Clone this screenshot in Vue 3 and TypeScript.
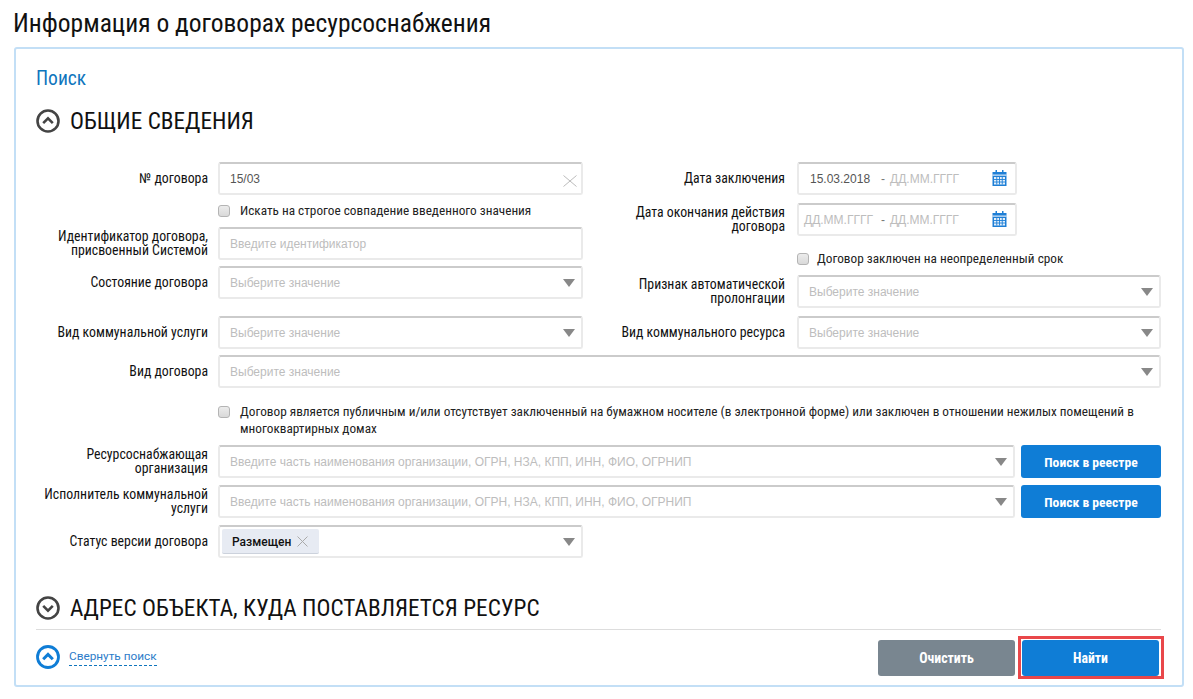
<script setup lang="ts">
const orgPlaceholder = 'Введите часть наименования организации, ОГРН, НЗА, КПП, ИНН, ФИО, ОГРНИП'
const selectPlaceholder = 'Выберите значение'
</script>

<template>
  <div class="page">
    <h1 class="title">Информация о договорах ресурсоснабжения</h1>
    <section class="panel">
      <h2 class="search">Поиск</h2>
      <div class="section-head first">
        <svg class="round" viewBox="0 0 24 24"><circle cx="12" cy="12" r="10.500" fill="none" stroke="#444" stroke-width="2.600" /><path d="M7.200 14.200 12 9.400l4.800 4.800" fill="none" stroke="#444" stroke-width="2.600" /></svg>
        <span>ОБЩИЕ СВЕДЕНИЯ</span>
      </div>

      <div class="columns">
        <div class="col">
          <div class="row">
            <label class="lbl left">№ договора</label>
            <div class="field">
              <span class="value">15/03</span>
              <svg class="clear" viewBox="0 0 14 12" preserveAspectRatio="none"><path d="M.5.500l13 11M13.500.500l-13 11" stroke="#bbb" stroke-width="1" fill="none" /></svg>
            </div>
          </div>
          <div class="check-row left-check after-field">
            <span class="box"></span><span class="check-text">Искать на строгое совпадение введенного значения</span>
          </div>
          <div class="row m8">
            <label class="lbl left">Идентификатор договора, присвоенный Системой</label>
            <div class="field"><span class="ph">Введите идентификатор</span></div>
          </div>
          <div class="row m6">
            <label class="lbl left">Состояние договора</label>
            <div class="field"><span class="ph">{{ selectPlaceholder }}</span><i class="arrow"></i></div>
          </div>
          <div class="row m17">
            <label class="lbl left">Вид коммунальной услуги</label>
            <div class="field"><span class="ph">{{ selectPlaceholder }}</span><i class="arrow"></i></div>
          </div>
        </div>

        <div class="col right">
          <div class="row">
            <label class="lbl rlbl">Дата заключения</label>
            <div class="field date">
              <span class="value d1">15.03.2018</span><span class="dash">-</span><span class="ph">ДД.ММ.ГГГГ</span>
              <svg class="cal" viewBox="0 0 14 16"><path d="M0 2h14v14H0z" fill="#1e7fd6" /><path d="M3 0h1.500v3H3zM9.500 0H11v3H9.500z" fill="#1e7fd6" /><path d="M0 4.600h14v1H0z" fill="#fff" /><path d="M1.500 7h11v7.500h-11z" fill="#e4f0fb" /><path d="M4.250 7v7.500M7 7v7.500M9.750 7v7.500M1.500 9.500h11M1.500 12h11" stroke="#1e7fd6" stroke-width=".9" /></svg>
            </div>
          </div>
          <div class="row m8">
            <label class="lbl rlbl">Дата окончания действия договора</label>
            <div class="field date">
              <span class="ph d0">ДД.ММ.ГГГГ</span><span class="dash">-</span><span class="ph">ДД.ММ.ГГГГ</span>
              <svg class="cal" viewBox="0 0 14 16"><path d="M0 2h14v14H0z" fill="#1e7fd6" /><path d="M3 0h1.500v3H3zM9.500 0H11v3H9.500z" fill="#1e7fd6" /><path d="M0 4.600h14v1H0z" fill="#fff" /><path d="M1.500 7h11v7.500h-11z" fill="#e4f0fb" /><path d="M4.250 7v7.500M7 7v7.500M9.750 7v7.500M1.500 9.500h11M1.500 12h11" stroke="#1e7fd6" stroke-width=".9" /></svg>
            </div>
          </div>
          <div class="check-row right-check">
            <span class="box"></span><span class="check-text">Договор заключен на неопределенный срок</span>
          </div>
          <div class="row m8">
            <label class="lbl rlbl">Признак автоматической пролонгации</label>
            <div class="field"><span class="ph">{{ selectPlaceholder }}</span><i class="arrow"></i></div>
          </div>
          <div class="row m8">
            <label class="lbl rlbl">Вид коммунального ресурса</label>
            <div class="field"><span class="ph">{{ selectPlaceholder }}</span><i class="arrow"></i></div>
          </div>
        </div>
      </div>

      <div class="row m6">
        <label class="lbl left">Вид договора</label>
        <div class="field"><span class="ph">{{ selectPlaceholder }}</span><i class="arrow"></i></div>
      </div>

      <div class="check-row left-check public">
        <span class="box"></span>
        <span class="check-text">Договор является публичным и/или отсутствует заключенный на бумажном носителе (в электронной форме) или заключен в отношении нежилых помещений в многоквартирных домах</span>
      </div>

      <div class="row m8">
        <label class="lbl left">Ресурсоснабжающая организация</label>
        <div class="field"><span class="ph">{{ orgPlaceholder }}</span><i class="arrow"></i></div>
        <button class="btn reg" type="button">Поиск в реестре</button>
      </div>
      <div class="row m7">
        <label class="lbl left">Исполнитель коммунальной услуги</label>
        <div class="field"><span class="ph">{{ orgPlaceholder }}</span><i class="arrow"></i></div>
        <button class="btn reg" type="button">Поиск в реестре</button>
      </div>
      <div class="row m7 status-row">
        <label class="lbl left">Статус версии договора</label>
        <div class="field status">
          <span class="tag">Размещен<svg class="tag-x" viewBox="0 0 11 11"><path d="M.5.500l10 10M10.500.500l-10 10" stroke="#aaa" stroke-width="1" fill="none" /></svg></span>
          <i class="arrow"></i>
        </div>
      </div>

      <div class="section-head second">
        <svg class="round" viewBox="0 0 24 24"><circle cx="12" cy="12" r="10.500" fill="none" stroke="#444" stroke-width="2.600" /><path d="M7.200 9.800 12 14.600l4.800-4.800" fill="none" stroke="#444" stroke-width="2.600" /></svg>
        <span>АДРЕС ОБЪЕКТА, КУДА ПОСТАВЛЯЕТСЯ РЕСУРС</span>
      </div>

      <div class="footer">
        <svg class="round blue" viewBox="0 0 24 24"><circle cx="12" cy="12" r="10.500" fill="none" stroke="#0f7dd6" stroke-width="2.800" /><path d="M7.200 14.200 12 9.400l4.800 4.800" fill="none" stroke="#0f7dd6" stroke-width="3" /></svg>
        <a class="collapse">Свернуть поиск</a>
        <button class="btn clear-btn" type="button">Очистить</button>
        <span class="find-wrap"><button class="btn find" type="button">Найти</button><i class="highlight"></i></span>
      </div>
    </section>
  </div>
</template>

<style>
html, body { margin: 0; background: #fff; }
</style>

<style scoped>
.page {
  width: 1193px;
  height: 699px;
  overflow: hidden;
  padding: 9px 9px 0 14px;
  box-sizing: border-box;
  font-family: "Roboto Condensed", "Liberation Sans Narrow", Roboto, sans-serif;
  color: #111;
}
.title { margin: 0; font-size: 25.500px; line-height: 29px; font-weight: 400; height: 38px; margin-left: -1px; }
.panel {
  height: 640px;
  box-sizing: border-box;
  border: 2px solid #c3dff6;
  border-radius: 3px;
  padding: 19px 21px 0 20px;
}
.search { margin: 0; font-size: 19.500px; line-height: 22px; font-weight: 400; color: #0f75bd; }
.section-head { display: flex; align-items: center; gap: 10px; font-size: 23.250px; line-height: 28px; color: #111; }
.section-head.first { margin-top: 17px; }
.section-head.second { margin-top: 36px; padding-bottom: 7px; border-bottom: 1px solid #ddd; }
.round { width: 24px; height: 24px; flex: none; }
.columns { display: flex; margin-top: 27px; }
.col { width: 547px; flex: none; }
.col.right { width: 578px; }
.row { display: flex; align-items: center; }
.lbl { text-align: right; font-size: 13.800px; line-height: 14px; flex: none; box-sizing: border-box; padding-bottom: 2px; }
.lbl.left { width: 172px; margin-right: 10px; }
.lbl.rlbl { width: 202px; margin-right: 12px; }
.field {
  flex: 1;
  position: relative;
  height: 33px;
  box-sizing: border-box;
  border: 2px solid #eaeaea;
  border-top-color: #cbcbcb;
  border-radius: 3px;
  padding: 0 10px;
  display: flex;
  align-items: center;
  font-family: "Liberation Sans", Arial, sans-serif;
  font-size: 12px;
  background: #fff;
  min-width: 0;
}
.value { color: #555; }
.ph { color: #bdbdbd; white-space: nowrap; }
.clear { position: absolute; right: 4px; top: 11px; width: 14px; height: 12px; }
.arrow {
  position: absolute;
  right: 6px;
  top: 11px;
  width: 0;
  height: 0;
  border-left: 6px solid transparent;
  border-right: 6px solid transparent;
  border-top: 8px solid #888;
}
.date { flex: none; width: 220px; padding: 0 5px 0 11px; }
.d0 { margin-left: -6px; }
.dash { margin: 0 5px 0 11px; color: #777; }
.d0 + .dash { margin-left: 8px; }
.cal { position: absolute; right: 8px; top: 6px; width: 15px; height: 16px; }
.check-row { display: flex; align-items: flex-start; font-size: 13.250px; line-height: 17px; }
.box {
  width: 10px;
  height: 10px;
  flex: none;
  margin: 3px 10px 0 0;
  border: 1px solid #b4b4b4;
  border-radius: 3px;
  background: linear-gradient(#ececec, #d9d9d9);
}
.check-text { color: #222; }
.left-check { margin-left: 182px; }
.after-field { margin-top: 7px; }
.right-check { margin-left: 214px; margin-top: 14px; }
.right-check .box { margin-right: 8px; }
.m8 { margin-top: 8px; }
.m7 { margin-top: 7px; }
.m6 { margin-top: 6px; }
.m17 { margin-top: 17px; }
.public { margin-top: 15px; }
.btn {
  border: 0;
  border-radius: 3px;
  background: #0f7dd6;
  color: #fff;
  font-family: inherit;
  font-size: 13.800px;
  font-weight: 700;
  height: 33px;
  flex: none;
}
.reg { width: 140px; margin-left: 6px; font-size: 13.600px; }
.status-row .field { flex: none; width: 365px; }
.status { padding: 0 2px; }
.tag {
  display: inline-flex;
  align-items: center;
  height: 25px;
  box-sizing: border-box;
  padding: 1px 11px 0 10px;
  background: #e7ebf3;
  border-bottom: 1px solid #ccd2dc;
  border-radius: 2px;
  font-family: Roboto, "Liberation Sans", sans-serif;
  font-size: 12px;
  font-weight: 500;
  color: #111;
}
.tag-x { width: 11px; height: 11px; margin-left: 6px; }
.footer { display: flex; align-items: center; margin-top: 10px; height: 36px; }
.round.blue { margin-top: -2px; }
.collapse { margin-left: 9px; margin-top: -2px; font-family: Roboto, "Liberation Sans", sans-serif; font-size: 11.800px; color: #2d7cc9; border-bottom: 1px dashed #0f75bd; line-height: 16px; padding-bottom: 1px; }
.clear-btn { margin-left: auto; width: 137px; height: 36px; background: #798690; }
.find-wrap { position: relative; display: flex; margin-left: 7px; margin-right: 2px; }
.find { width: 137px; height: 36px; }
.highlight {
  position: absolute;
  left: -4px;
  right: -5px;
  top: -4px;
  bottom: -3px;
  border: 3px solid #e9474a;
  pointer-events: none;
}
</style>
